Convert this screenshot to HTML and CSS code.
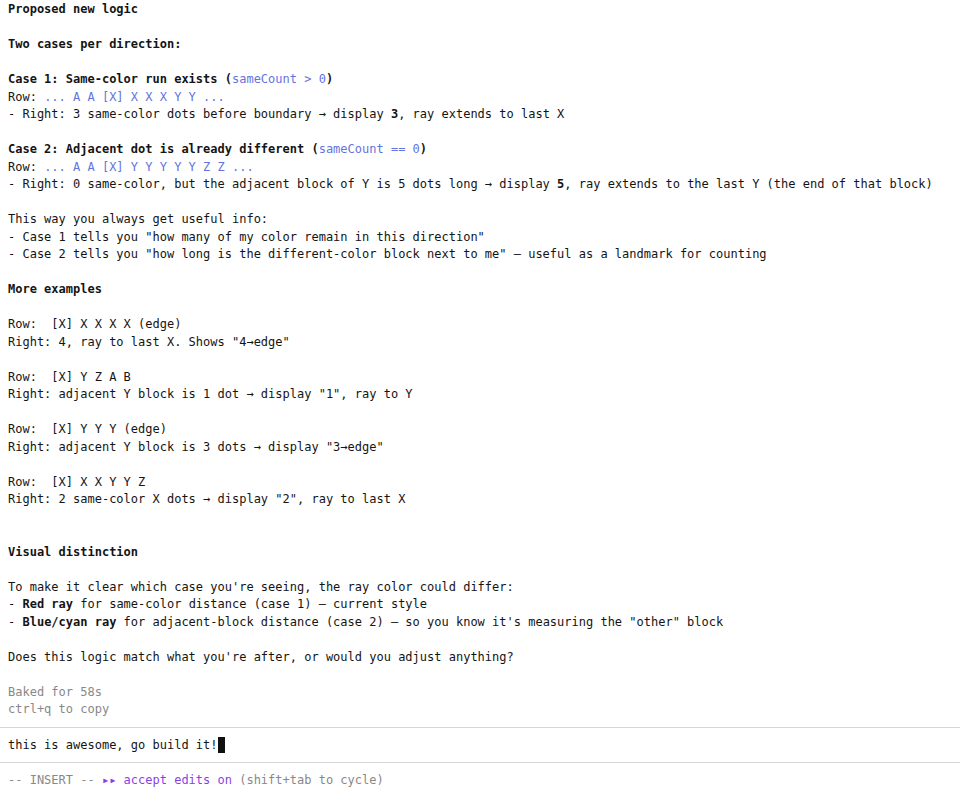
FILE: index.html
```html
<!DOCTYPE html>
<html>
<head>
<meta charset="utf-8">
<link rel="stylesheet" href="styles.css">
</head>
<body>
<div class="terminal">
  <div class="transcript">
    <div class="line b">Proposed new logic</div>
    <div class="line"></div>
    <div class="line b">Two cases per direction:</div>
    <div class="line"></div>
    <div class="line b">Case 1: Same-color run exists (<span class="code">sameCount &gt; 0</span>)</div>
    <div class="line">Row: <span class="code">... A A [X] X X X Y Y ...</span></div>
    <div class="line">- Right: 3 same-color dots before boundary → display <b>3</b>, ray extends to last X</div>
    <div class="line"></div>
    <div class="line b">Case 2: Adjacent dot is already different (<span class="code">sameCount == 0</span>)</div>
    <div class="line">Row: <span class="code">... A A [X] Y Y Y Y Y Z Z ...</span></div>
    <div class="line">- Right: 0 same-color, but the adjacent block of Y is 5 dots long → display <b>5</b>, ray extends to the last Y (the end of that block)</div>
    <div class="line"></div>
    <div class="line">This way you always get useful info:</div>
    <div class="line">- Case 1 tells you "how many of my color remain in this direction"</div>
    <div class="line">- Case 2 tells you "how long is the different-color block next to me" – useful as a landmark for counting</div>
    <div class="line"></div>
    <div class="line b">More examples</div>
    <div class="line"></div>
    <div class="line">Row:  [X] X X X X (edge)</div>
    <div class="line">Right: 4, ray to last X. Shows "4→edge"</div>
    <div class="line"></div>
    <div class="line">Row:  [X] Y Z A B</div>
    <div class="line">Right: adjacent Y block is 1 dot → display "1", ray to Y</div>
    <div class="line"></div>
    <div class="line">Row:  [X] Y Y Y (edge)</div>
    <div class="line">Right: adjacent Y block is 3 dots → display "3→edge"</div>
    <div class="line"></div>
    <div class="line">Row:  [X] X X Y Y Z</div>
    <div class="line">Right: 2 same-color X dots → display "2", ray to last X</div>
    <div class="line"></div>
    <div class="line"></div>
    <div class="line b">Visual distinction</div>
    <div class="line"></div>
    <div class="line">To make it clear which case you're seeing, the ray color could differ:</div>
    <div class="line">- <b>Red ray</b> for same-color distance (case 1) – current style</div>
    <div class="line">- <b>Blue/cyan ray</b> for adjacent-block distance (case 2) – so you know it's measuring the "other" block</div>
    <div class="line"></div>
    <div class="line">Does this logic match what you're after, or would you adjust anything?</div>
    <div class="line"></div>
    <div class="line muted">Baked for 58s</div>
    <div class="line muted">ctrl+q to copy</div>
  </div>
  <div class="input">
    <div class="line">this is awesome, go build it!<span class="cursor"></span></div>
  </div>
  <div class="status">
    <div class="line"><span class="muted">-- INSERT -- </span><span class="accent">▸▸ accept edits on</span><span class="muted"> (shift+tab to cycle)</span></div>
  </div>
</div>
</body>
</html>
```

FILE: styles.css
```css
html, body {
  margin: 0;
  padding: 0;
  background: #ffffff;
}

.terminal {
  font-family: "DejaVu Sans Mono", "Liberation Mono", monospace;
  font-size: 12px;
  line-height: 17.5px;
  color: #141414;
  display: flex;
  flex-direction: column;
}

.transcript {
  padding: 1px 8px 0;
}

.line {
  white-space: pre;
  height: 17.5px;
}

.b, b {
  font-weight: bold;
}

.b .code {
  font-weight: normal;
}

.code {
  color: #6473e0;
}

.muted {
  color: #888888;
}

.accent {
  color: #8a3fe6;
}

.input {
  margin-top: 8px;
  border-top: 1px solid #d6d6d6;
  border-bottom: 1px solid #d6d6d6;
  padding: 9px 8px 8px;
}

.cursor {
  display: inline-block;
  width: 7px;
  height: 16px;
  background: #111111;
  vertical-align: -4px;
}

.status {
  padding: 9px 8px 0;
}
```
